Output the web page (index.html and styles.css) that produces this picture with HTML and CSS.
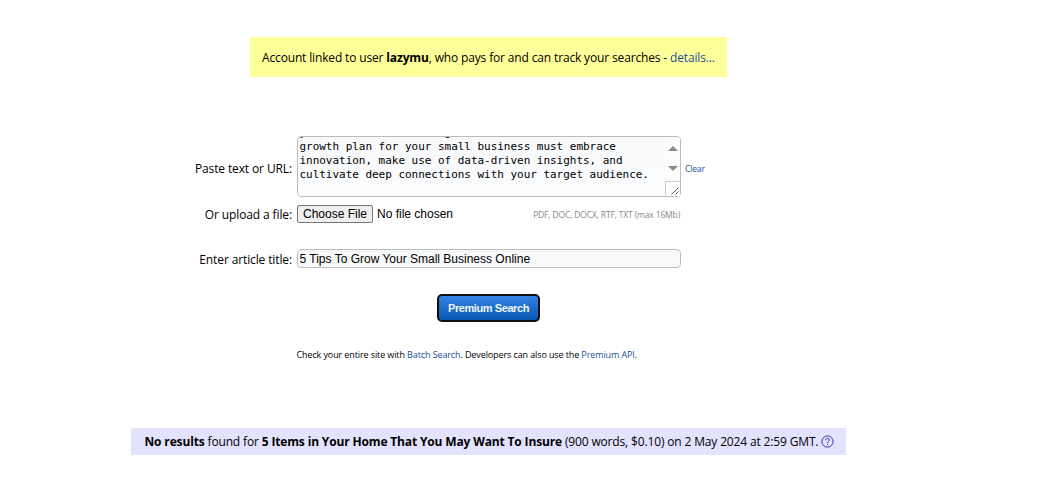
FILE: index.html
```
<!DOCTYPE html>
<html lang="en">
<head>
    <meta charset="UTF-8">
    <meta name="viewport" content="width=device-width, initial-scale=1.0">
    <title>Premium Search</title>
    <link rel="stylesheet" href="styles.css">
</head>
<body>
    <main>
        <div class="account-notice">Account linked to user <b>lazymu</b>, who pays for and can track your searches - <a href="#">details...</a></div>

        <form class="search-form">
            <div class="form-row row-text">
                <label>Paste text or URL:</label>
                <div class="text-box">
                    <div class="text-content">you need more. Creating a modern
growth plan for your small business must embrace
innovation, make use of data-driven insights, and
cultivate deep connections with your target audience.</div>
                    <div class="scrollbar">
                        <svg class="arrow-up" width="10" height="5" viewBox="0 0 10 5"><path d="M5 0L10 5H0z" fill="#8a8a8a"/></svg>
                        <svg class="arrow-down" width="10" height="5" viewBox="0 0 10 5"><path d="M0 0H10L5 5z" fill="#8a8a8a"/></svg>
                        <div class="resizer">
                            <svg width="8" height="8" viewBox="0 0 8 8"><path d="M0.5 7.5L7.5 0.5M4.5 7.5L7.5 4.5" stroke="#555" fill="none"/></svg>
                        </div>
                    </div>
                </div>
                <a class="clear-link" href="#">Clear</a>
            </div>

            <div class="form-row row-file">
                <label>Or upload a file:</label>
                <div class="file-field">
                    <button type="button" class="file-btn">Choose File</button>
                    <span class="file-name">No file chosen</span>
                    <span class="file-types">PDF, DOC, DOCX, RTF, TXT (max 16Mb)</span>
                </div>
            </div>

            <div class="form-row row-title">
                <label for="title">Enter article title:</label>
                <input type="text" id="title" value="5 Tips To Grow Your Small Business Online">
            </div>

            <button type="button" class="search-btn">Premium Search</button>
            <p class="hint">Check your entire site with <a href="#">Batch Search</a>. Developers can also use the <a href="#">Premium API</a>.</p>
        </form>

        <div class="result">
            <span><b>No results</b> found for <b>5 Items in Your Home That You May Want To Insure</b> (900 words, $0.10) on 2 May 2024 at 2:59 GMT.</span>
            <svg class="help" width="13" height="13" viewBox="0 0 13 13" fill="none" stroke="#3a2fb5">
                <circle cx="6.5" cy="6.5" r="5.6"/>
                <path d="M4.6 5.1C4.6 2.9 8.4 2.9 8.4 5C8.4 6.3 6.5 6.2 6.5 7.8M6.5 8.8V10"/>
            </svg>
        </div>
    </main>
</body>
</html>
```

FILE: styles.css
```
* {
    margin: 0;
    padding: 0;
    box-sizing: border-box;
}

body {
    font-family: "Open Sans", sans-serif;
    font-size: 12px;
    letter-spacing: -0.15px;
    color: #000;
    background-color: #fff;
}

main {
    width: 715px;
    margin-left: 131px;
    padding-top: 37px;
}

a {
    color: #1a4f9c;
    text-decoration: none;
}

.account-notice {
    width: 477px;
    height: 40px;
    margin: 0 auto;
    padding-left: 12px;
    line-height: 41px;
    white-space: nowrap;
    background-color: #ffff99;
}

.search-form {
    padding-top: 59px;
}

.form-row {
    display: grid;
    grid-template-columns: 161px 384px auto;
    column-gap: 5px;
    align-items: center;
}

.form-row label {
    text-align: right;
    white-space: nowrap;
    letter-spacing: -0.12px;
}

.row-text label {
    padding-top: 4px;
}

.text-box {
    height: 61px;
    display: flex;
    border: 1px solid #bbb;
    border-radius: 4px;
    background: linear-gradient(#f7f9fb, #fafcfe);
    overflow: hidden;
}

.text-content {
    flex: 1;
    margin-top: -11px;
    padding-left: 1.5px;
    font-family: "DejaVu Sans Mono", monospace;
    font-size: 11px;
    line-height: 14px;
    letter-spacing: -0.03px;
    white-space: pre;
}

.scrollbar {
    width: 15px;
    display: flex;
    flex-direction: column;
    align-items: center;
    background-color: #fcfcfc;
}

.arrow-up {
    margin-top: 9px;
}

.arrow-down {
    margin-top: 15px;
}

.resizer {
    width: 15px;
    height: 15px;
    margin-top: auto;
    display: flex;
    align-items: flex-end;
    justify-content: flex-end;
    padding: 0 1px 1px 0;
    border-top: 1px solid #ccc;
    border-left: 1px solid #ccc;
    background-color: #fff;
}

.clear-link {
    margin-left: -1px;
    padding-top: 4px;
    font-size: 8.5px;
}

.row-file {
    height: 20px;
    margin-top: 7px;
}

.file-field {
    display: flex;
    align-items: center;
}

.file-btn {
    width: 76px;
    height: 18px;
    border: 1px solid #767676;
    border-radius: 2px;
    background-color: #efefef;
    font-family: "Liberation Sans", Arial, sans-serif;
    font-size: 12px;
    color: #000;
}

.file-name {
    margin-left: 4px;
    font-family: "Liberation Sans", Arial, sans-serif;
    font-size: 12px;
    letter-spacing: 0;
}

.file-types {
    margin-left: auto;
    padding: 1px 1px 0 0;
    font-size: 8.5px;
    color: #888;
}

.row-title {
    height: 19px;
    margin-top: 25px;
}

.row-title label {
    padding-top: 2px;
}

.row-title input {
    width: 100%;
    height: 19px;
    padding: 0 1.5px;
    border: 1px solid #bbb;
    border-radius: 4px;
    background: linear-gradient(#f5f7f7, #fafcfc);
    font-family: "Liberation Sans", Arial, sans-serif;
    font-size: 12px;
    color: #000;
}

.search-btn {
    display: block;
    width: 103px;
    height: 28px;
    margin: 26px 0 0 306px;
    border: 2px solid #101010;
    border-radius: 5px;
    background: linear-gradient(#3484e4, #0557b0);
    color: #f0f5fc;
    font-family: "Liberation Sans", Arial, sans-serif;
    font-size: 11px;
    font-weight: bold;
    letter-spacing: -0.42px;
    white-space: nowrap;
}

.hint {
    margin: 26px 0 0 165.5px;
    font-size: 9px;
    line-height: 14px;
    letter-spacing: -0.11px;
    white-space: nowrap;
}

.result {
    height: 27px;
    margin-top: 66px;
    padding-left: 13.5px;
    display: flex;
    align-items: center;
    white-space: nowrap;
    background-color: #e3e3ff;
}

.help {
    flex-shrink: 0;
    margin-left: 3px;
}
```
